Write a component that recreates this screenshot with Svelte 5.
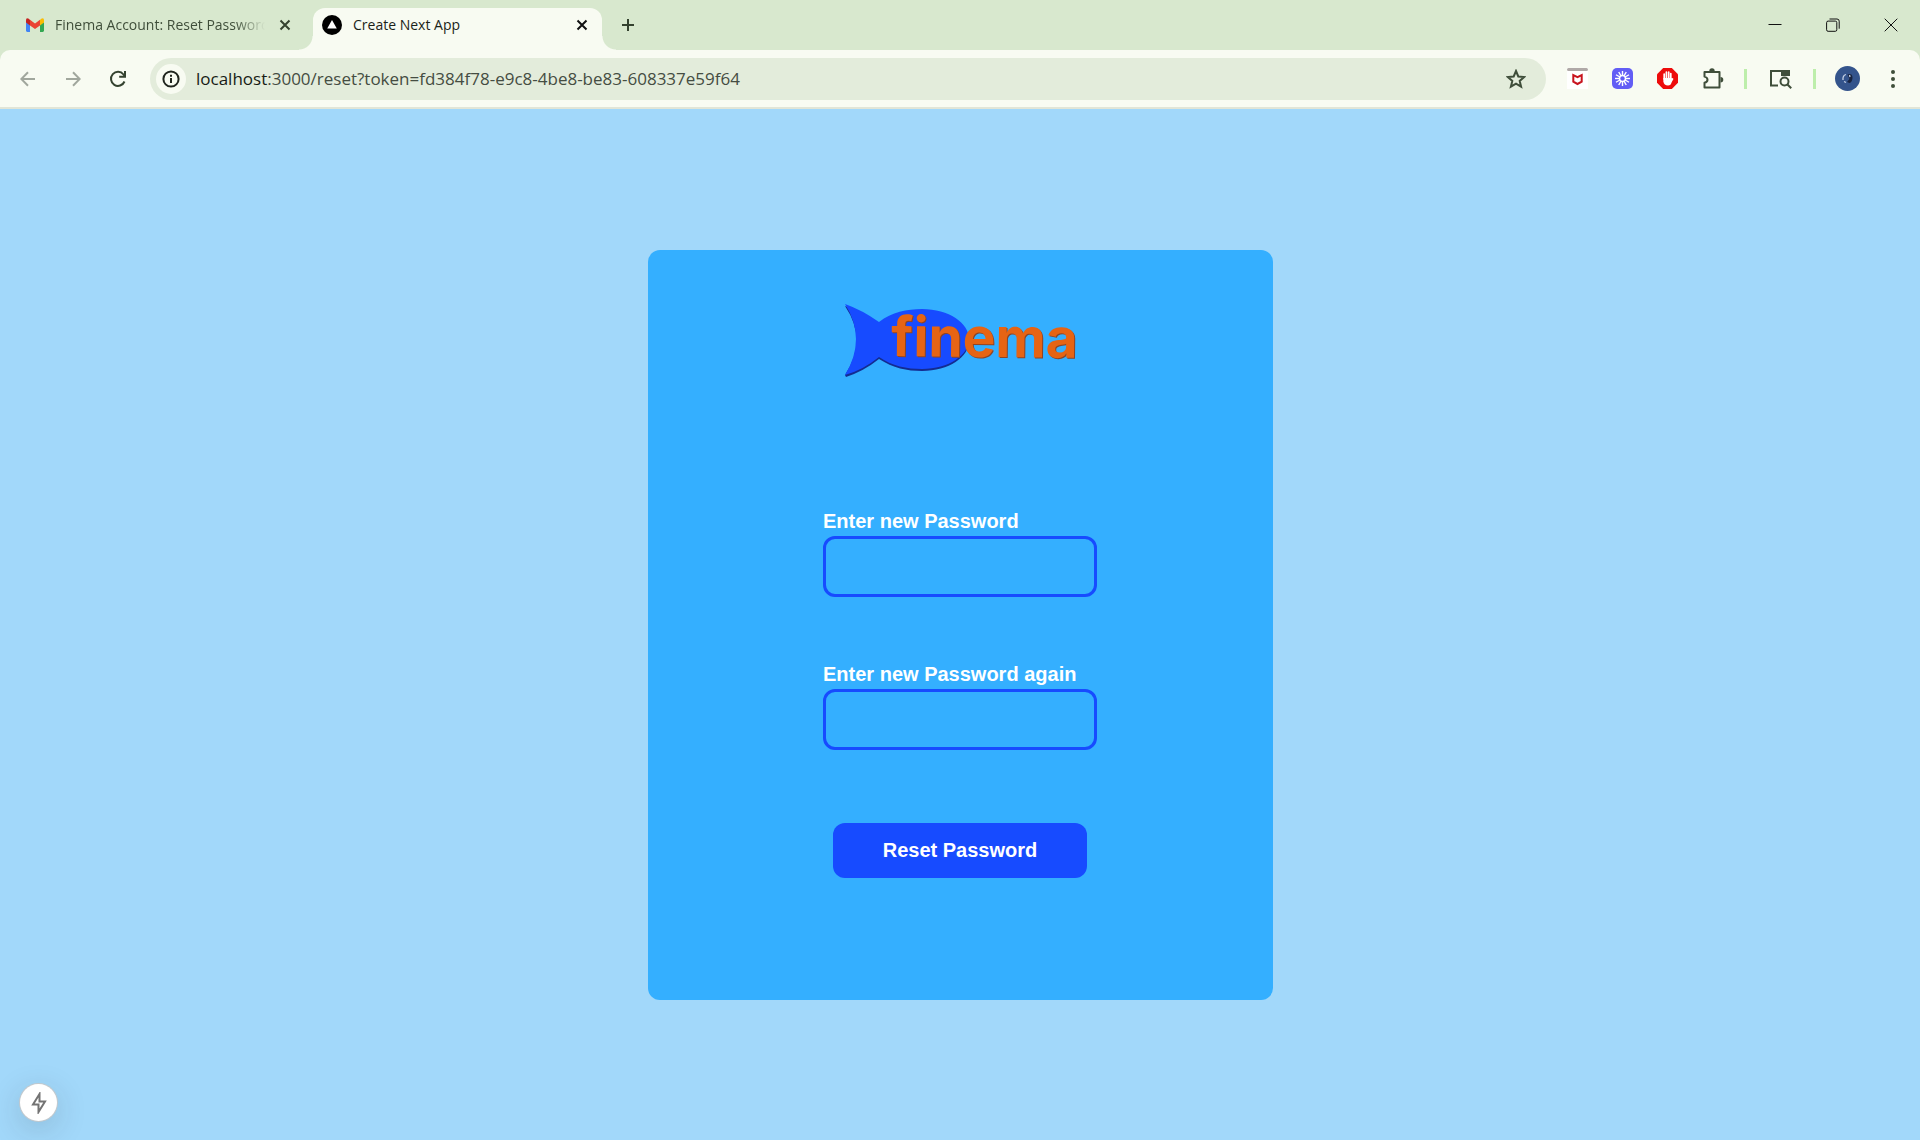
<script>
  const rays = Array.from({ length: 12 }, (_, i) => i * 30);
  let first = $state('');
  let second = $state('');
</script>

<div class="browser">
  <header>
    <div class="strip">
      <div class="tab">
        <svg class="gmail" width="18" height="14" viewBox="0 0 18 14">
          <path fill="#4285f4" d="M0 4v8.600q0 1.400 1.300 1.400H4V6z" />
          <path fill="#34a853" d="M18 4v8.600q0 1.400-1.300 1.400H14V6z" />
          <path fill="#c5221f" d="M0 2.200V4.400L4 7.400V2L2.800.7Q0-.8 0 2.200" />
          <path fill="#fbbc04" d="M18 2.200V4.400L14 7.400V2L15.200.7Q18-.8 18 2.200" />
          <path fill="#ea4335" d="M4 7.400V1.700L9 5.400l5-3.700v5.700l-5 3.700z" />
        </svg>
        <span class="title fade">Finema Account: Reset Password</span>
        <button class="close" aria-label="Close tab">
          <svg width="12" height="12" viewBox="0 0 12 12"><path d="M1.500 1.500l9 9M10.500 1.500l-9 9" /></svg>
        </button>
      </div>
      <div class="tab active">
        <svg width="20" height="20" viewBox="0 0 20 20">
          <circle cx="10" cy="10" r="10" /><path fill="#fff" d="M10 5l4.800 8.500H5.200z" />
        </svg>
        <span class="title">Create Next App</span>
        <button class="close" aria-label="Close tab">
          <svg width="12" height="12" viewBox="0 0 12 12"><path d="M1.500 1.500l9 9M10.500 1.500l-9 9" /></svg>
        </button>
      </div>
      <button class="new" aria-label="New tab">
        <svg width="14" height="14" viewBox="0 0 14 14"><path d="M7 1v12M1 7h12" /></svg>
      </button>
      <div class="window">
        <button aria-label="Minimize"><svg width="14" height="14" viewBox="0 0 14 14"><path d="M.5 6.500h13" /></svg></button>
        <button aria-label="Restore">
          <svg width="14" height="14" viewBox="0 0 14 14"><rect x=".6" y="3.100" width="10.200" height="10.200" rx="1.500" /><path d="M3.500 1h7.500q2.200 0 2.200 2.200v7.500" /></svg>
        </button>
        <button aria-label="Close"><svg width="14" height="14" viewBox="0 0 14 14"><path d="M.7.7l12.600 12.600M13.300.7L.7 13.300" /></svg></button>
      </div>
    </div>

    <div class="toolbar">
      <nav>
        <button class="off" aria-label="Back"><svg width="16" height="16" viewBox="0 0 16 16"><path d="M15 8H1.500M8 1.300L1.300 8 8 14.700" /></svg></button>
        <button class="off" aria-label="Forward"><svg width="16" height="16" viewBox="0 0 16 16"><path d="M1 8h13.500M8 1.300L14.700 8 8 14.700" /></svg></button>
        <button aria-label="Reload"><svg width="18" height="18" viewBox="0 0 18 18"><path d="M15.500 11.500A7 7 0 1 1 14.500 4.500L16 6.200" /><path d="M16 1v5.800h-5.800" /></svg></button>
      </nav>
      <div class="address">
        <button class="info" aria-label="Site information">
          <svg width="18" height="18" viewBox="0 0 18 18"><circle cx="9" cy="9" r="7.600" /><path d="M9 8v5M9 4.700v2" /></svg>
        </button>
        <div class="url"><b>localhost</b>:3000/reset?token=fd384f78-e9c8-4be8-be83-608337e59f64</div>
        <button class="star" aria-label="Bookmark this tab">
          <svg width="20" height="20" viewBox="0 0 20 20"><path d="M10 2l2.300 5.500 5.900.5-4.500 3.900 1.400 5.800-5.100-3.100-5.100 3.100 1.400-5.800L1.800 8l5.900-.5z" /></svg>
        </button>
      </div>
      <div class="tools">
        <button aria-label="McAfee">
          <svg width="21" height="21" viewBox="0 0 21 21"><rect width="21" height="21" fill="#fff" /><rect width="21" height="3" rx="1.500" fill="#b0a9a7" /><path fill="none" stroke="#c8141e" stroke-width="2" d="M6.300 7.200v6.500l4.200 2.300 4.200-2.300V7.200l-4.200 2z" /></svg>
        </button>
        <button aria-label="Loom">
          <svg width="21" height="21" viewBox="0 0 21 21"><rect width="21" height="21" rx="5" fill="#625df5" />
            {#each rays as angle}<path stroke="#fff" stroke-width="1.400" d="M10.500 3v5" transform="rotate({angle} 10.500 10.500)" />{/each}
            <circle cx="10.500" cy="10.500" r="3" fill="#625df5" stroke="#fff" stroke-width="1.500" />
          </svg>
        </button>
        <button aria-label="AdBlock">
          <svg width="21" height="21" viewBox="0 0 21 21"><path fill="#ed0b0b" d="M6.200 0h8.600L21 6.200v8.600L14.800 21H6.200L0 14.800V6.200z" /><path fill="none" stroke="#fff" stroke-width="1.700" stroke-linecap="round" d="M7.200 11V6M9.400 10V4M11.700 10V4M13.800 11V5.500M14 13.500l1.500-2.500" /><path fill="#fff" d="M6.350 10h8.300v4Q14 17.500 11 17.500q-4 0-4.650-4z" /></svg>
        </button>
        <button aria-label="Extensions">
          <svg width="22" height="22" viewBox="0 0 22 22"><path fill="none" stroke="#3f4e3a" stroke-width="2" stroke-linejoin="round" d="M2.500 4h15v15.500h-15v-4.700q3-.8 3-3.100t-3-3.100z" /><path fill="#3f4e3a" d="M7.300 3q0-2.700 2.700-2.700T12.700 3zM18.500 9q2.800 0 2.800 2.700t-2.800 2.700z" /></svg>
        </button>
        <i></i>
        <button class="side" aria-label="Search this page">
          <svg width="23" height="20" viewBox="0 0 23 20"><path fill="none" stroke="#3f4e3a" stroke-width="2" d="M9 16.500H2V2h18v4" /><path fill="#3f4e3a" d="M12 1h9v6h-9z" /><circle cx="15.500" cy="12.500" r="4" fill="#f8fbf2" stroke="#3f4e3a" stroke-width="2" /><path stroke="#3f4e3a" stroke-width="2" d="M18.200 15.200l4 4" /></svg>
        </button>
        <i></i>
        <button class="profile" aria-label="Profile">
          <svg width="25" height="25" viewBox="0 0 25 25"><circle cx="12.500" cy="12.500" r="12.500" fill="#34548c" /><path fill="#192440" d="M12.500 8.500q5-2 5 3.500-.5 4.500-3 5l-2.500-1 2.500-3z" /><path fill="none" stroke="#c5d2e6" stroke-width="1.300" d="M11 8.500Q7.500 9.500 8 14M9 15.500l2 1M14.500 9l.5 2" /></svg>
        </button>
        <button class="menu" aria-label="Menu">
          <svg width="4" height="18" viewBox="0 0 4 18" fill="#3f4e3a"><circle cx="2" cy="2" r="2" /><circle cx="2" cy="9" r="2" /><circle cx="2" cy="16" r="2" /></svg>
        </button>
      </div>
    </div>
  </header>

  <main>
    <form onsubmit={(e) => e.preventDefault()}>
      <svg class="logo" width="260" height="100" viewBox="0 0 260 100" role="img" aria-label="finema">
        <path fill="#142c91" d="M15 16Q36 23 49 34C63 22 78 22 92 22C119 22 139 35 139 51S119 81 92 81C77 81 63 78 49 69Q34 81 16 87L15 85Q38 50 15 16" />
        <path fill="#174bff" d="M15 14Q32 20 49 32C62 22 77 19 92 19C119 19 139 33 139 49S119 79 92 79C77 79 62 76 49 67Q33 80 15 85Q37 49 15 14" />
        <g transform="rotate(0.6 62 66)">
          <text class="shade" x="62" y="67">finema</text>
          <text x="61" y="66">finema</text>
        </g>
      </svg>
      <div class="field">
        <label for="password">Enter new Password</label>
        <input id="password" type="password" bind:value={first} />
      </div>
      <div class="field">
        <label for="repeat">Enter new Password again</label>
        <input id="repeat" type="password" bind:value={second} />
      </div>
      <button class="submit">Reset Password</button>
    </form>
    <button class="dev" aria-label="Open developer tools">
      <svg width="16" height="22" viewBox="0 0 16 22"><path d="M8.500 2L2 12.500h5.500V20L14 9.500H8.500z" /></svg>
    </button>
  </main>
</div>

<style>
  :global(body) { margin: 0; }
  * { box-sizing: border-box; }
  button { border: 0; padding: 0; background: none; display: flex; align-items: center; justify-content: center; }
  svg { display: block; flex: none; }
  .browser { min-height: 100vh; display: flex; flex-direction: column; font-family: "Open Sans", sans-serif; }
  header { background: #d8e8ce; }
  .strip { height: 50px; display: flex; padding: 8px 0 0 10px; }
  .tab { width: 303px; height: 34px; display: flex; align-items: center; padding: 0 16px; color: #3f4e3a; }
  .gmail { margin-right: 11px; }
  .title { flex: 1; min-width: 0; font-size: 14px; line-height: 20px; white-space: nowrap; overflow: hidden; }
  .fade { mask-image: linear-gradient(to right, #000 180px, transparent 210px); margin-right: 8px; }
  .close { width: 24px; height: 24px; margin-left: auto; }
  .close svg, .new svg { fill: none; stroke: #34422f; stroke-width: 2; }
  .active { position: relative; width: 289px; height: 42px; padding: 0 8px 8px 9px; background: #f8fbf2; border-radius: 12px 12px 0 0; color: #1b1f19; }
  .active .title { margin-left: 11px; }
  .active .close svg { stroke: #111; }
  .active::before, .active::after { content: ""; position: absolute; bottom: 0; width: 14px; height: 14px; }
  .active::before { right: 100%; background: radial-gradient(circle at 0 0, transparent 13px, #f8fbf2 14px); }
  .active::after { left: 100%; background: radial-gradient(circle at 100% 0, transparent 13px, #f8fbf2 14px); }
  .new { width: 34px; height: 34px; margin-left: 9px; }
  .window { margin: -8px 0 0 auto; display: flex; }
  .window button { width: 58px; height: 49px; }
  .window svg { fill: none; stroke: #111; stroke-width: 1; }
  .toolbar { height: 59px; display: flex; align-items: center; padding: 0 5px; background: #f8fbf2; border-bottom: 2px solid #e1e5d7; border-radius: 10px 10px 0 0; }
  nav { display: flex; }
  nav button { width: 45px; height: 42px; }
  nav svg { fill: none; stroke: #34422f; stroke-width: 2; }
  .off svg { stroke: #a1a79d; }
  .address { flex: 1; height: 42px; margin-left: 10px; display: flex; align-items: center; padding: 0 20px 0 6px; background: #e3ecdb; border-radius: 21px; }
  .info { width: 30px; height: 30px; background: #f8fbf2; border-radius: 15px; }
  .info svg { fill: none; stroke: #20251e; stroke-width: 2; }
  .url { flex: 1; margin-left: 10px; font-size: 17px; line-height: 26px; color: #454d42; white-space: nowrap; }
  .url b { font-weight: 400; color: #171b15; }
  .star svg { fill: none; stroke: #3f4e3a; stroke-width: 2; }
  .tools { display: flex; align-items: center; margin-left: 9px; }
  .tools button { width: 45px; height: 42px; }
  .tools i { width: 3px; height: 20px; margin: 0 9px; background: #bdeeab; }
  .tools .side { width: 48px; }
  .tools .profile { width: 45px; }
  main { position: relative; flex: 1; display: flex; align-items: center; justify-content: center; background: #a2d8fa; font-family: "Liberation Sans", sans-serif; }
  form { width: 625px; min-height: 750px; padding: 40px 0; display: flex; flex-direction: column; align-items: center; background: #34afff; border-radius: 12px; }
  .logo { margin-bottom: 120px; }
  .logo text { font: 700 55px Inter, sans-serif; fill: #e66414; }
  .logo .shade { fill: #8c4428; }
  .field { width: 274px; margin-bottom: 66px; }
  label, .submit { font: bold 20px/23px "Liberation Sans", sans-serif; color: #fff; }
  label { display: block; padding-bottom: 3px; white-space: nowrap; }
  input { display: block; width: 100%; height: 61px; padding: 0 16px; border: 3px solid #174bff; border-radius: 12px; background: transparent; outline: 0; font-size: 20px; color: #fff; }
  .submit { width: 254px; height: 55px; margin-top: 7px; background: #174bff; border-radius: 12px; }
  .dev { position: absolute; left: 20px; bottom: 19px; width: 37px; height: 37px; border-radius: 50%; background: #fff; box-shadow: 0 0 0 1px #c2c9ce, 0 8px 32px #24242430; }
  .dev svg { fill: none; stroke: #737373; stroke-width: 2; }
</style>
